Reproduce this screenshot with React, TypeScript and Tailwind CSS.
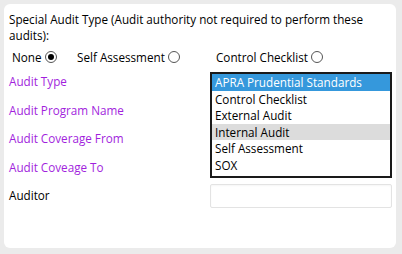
const options = [
  "APRA Prudential Standards",
  "Control Checklist",
  "External Audit",
  "Internal Audit",
  "Self Assessment",
  "SOX",
];

const labels = [
  { text: "Audit Type", purple: true },
  { text: "Audit Program Name", purple: true },
  { text: "Audit Coverage From", purple: true },
  { text: "Audit Coveage To", purple: true },
  { text: "Auditor", purple: false },
];

function Radio({ checked }: { checked?: boolean }) {
  return (
    <span className="ml-[3px] inline-flex h-[12px] w-[12px] items-center justify-center rounded-full border border-[#555] bg-white">
      {checked && <span className="h-[6px] w-[6px] rounded-full bg-black" />}
    </span>
  );
}

export default function App() {
  return (
    <div
      className="h-[254px] w-[402px] bg-[#ebebeb] pb-[6px] pl-[4px] pr-[6px] pt-[4px] text-[11.7px] leading-[16px] text-black"
      style={{ fontFamily: "'Open Sans', 'Liberation Sans', sans-serif" }}
    >
      <div className="h-full rounded-[6px] bg-white pl-[5px] pr-[4px] pt-[7px]">
        <p className="pr-[10px]">
          Special Audit Type (Audit authority not required to perform these audits):
        </p>

        {/* radio choices */}
        <div className="mt-[6px] flex h-[16px] items-center">
          <label className="flex w-[68px] items-center pl-[3px]">
            None
            <Radio checked />
          </label>
          <label className="flex w-[139px] items-center">
            Self Assessment
            <Radio />
          </label>
          <label className="flex items-center">
            Control Checklist
            <Radio />
          </label>
        </div>

        <div className="mt-[7px] flex">
          {/* labels */}
          <div className="w-[201px] pt-[1px]">
            {labels.map((l) => (
              <div
                key={l.text}
                className={`h-[28.5px] ${l.purple ? "text-[#a21fdd]" : "text-black"}`}
              >
                {l.text}
              </div>
            ))}
          </div>

          {/* list + input */}
          <div className="w-[182px]">
            <div className="border-2 border-[#1a1a1a] bg-white pb-[3px]">
              {options.map((o, i) => (
                <div
                  key={o}
                  className={`flex h-[16.5px] items-center pl-[3px] ${
                    i === 0
                      ? "bg-[#3598dc] text-white"
                      : i === 3
                        ? "bg-[#dcdcdc]"
                        : ""
                  }`}
                >
                  {o}
                </div>
              ))}
            </div>
            <div className="mt-[6px] h-[24px] rounded-[2px] border border-[#e3e3e3] shadow-[inset_0_1px_2px_rgba(0,0,0,0.04)]" />
          </div>
        </div>
      </div>
    </div>
  );
}
